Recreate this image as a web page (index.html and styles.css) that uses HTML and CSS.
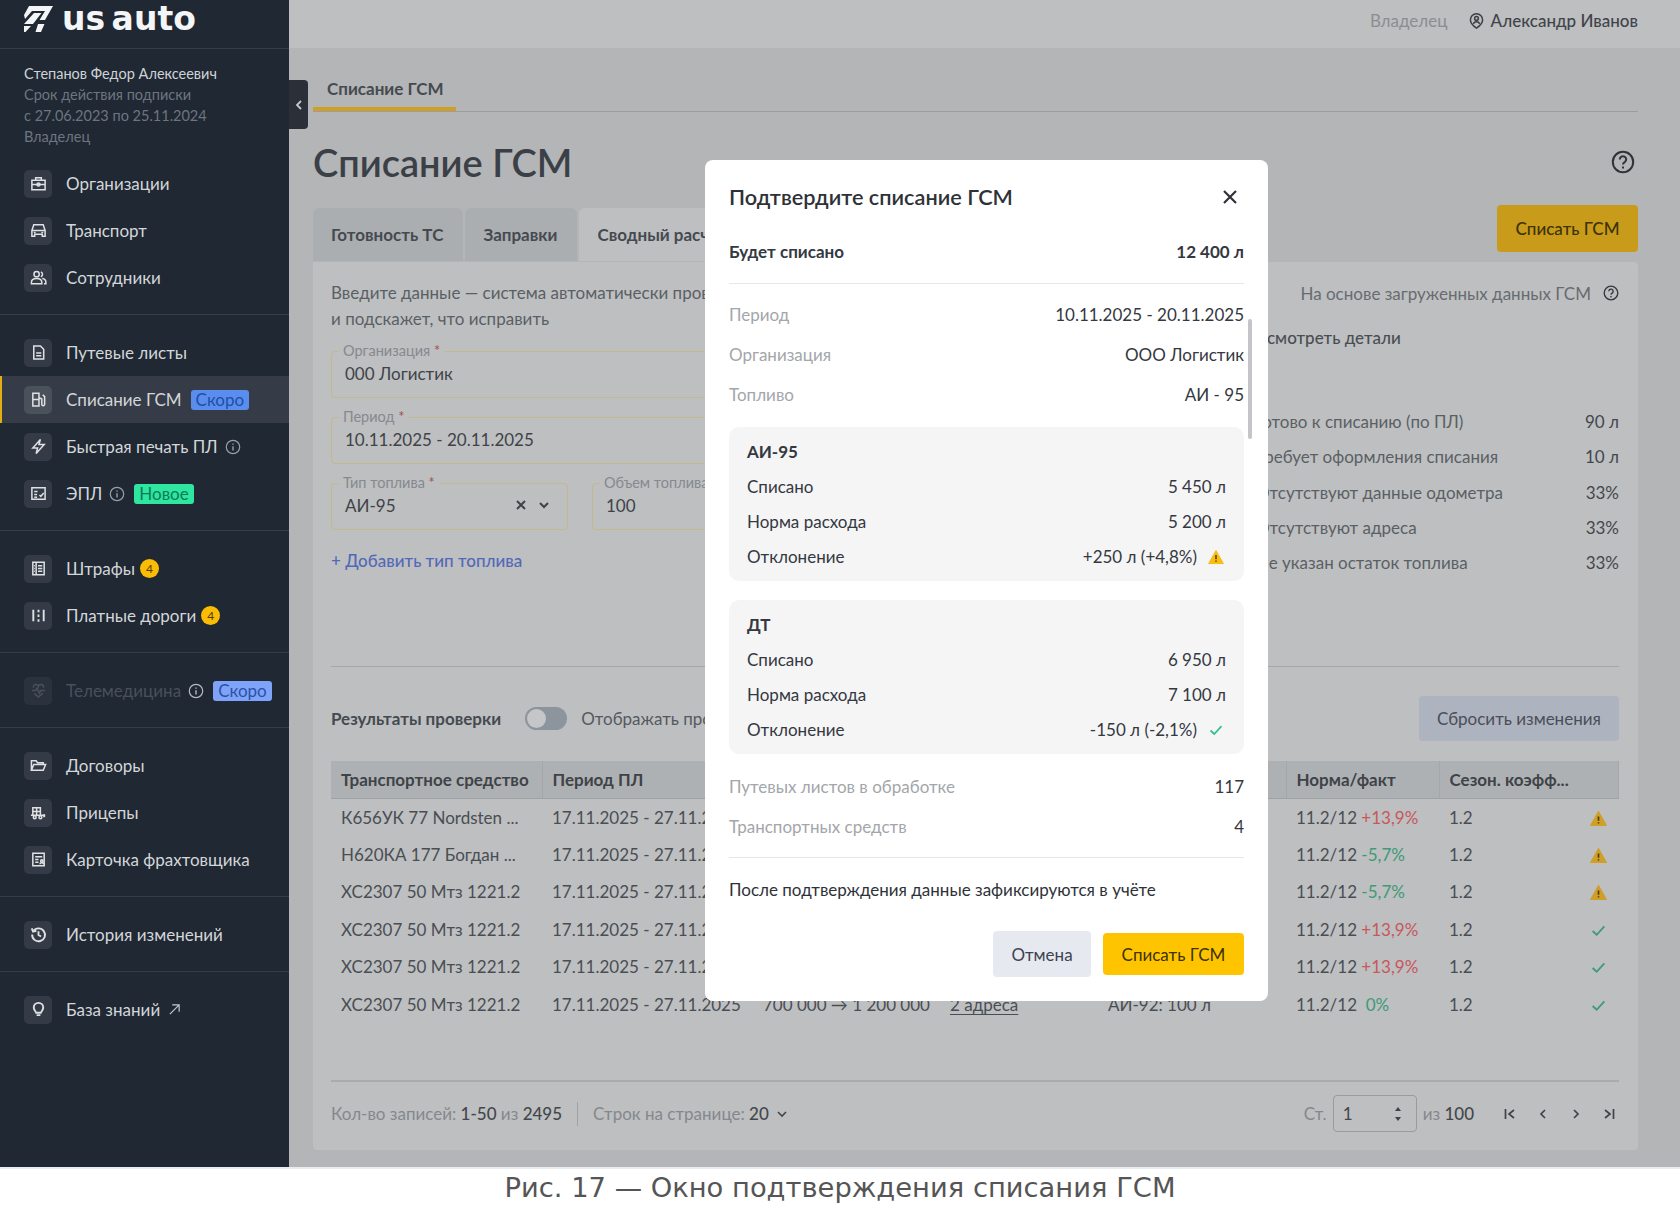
FILE: index.html
```
<!DOCTYPE html>
<html lang="ru">
<head>
    <meta charset="utf-8">
    <title>Списание ГСМ</title>
    <link rel="stylesheet" href="styles.css">
</head>
<body>
<svg class="defs" width="0" height="0">
    <symbol id="warn" viewBox="0 0 16 16"><path d="M8 1.500 15.400 14.600H.6Z" fill="currentColor" stroke="currentColor" stroke-linejoin="round"/><path d="M8 6v4.200M8 11.600v1.200" stroke="#4a3b06" stroke-width="1.500"/></symbol>
    <symbol id="check" viewBox="0 0 16 16"><path d="M2.500 8.500 6.300 12 13.500 4.200" fill="none" stroke="currentColor" stroke-width="1.700"/></symbol>
    <symbol id="info" viewBox="0 0 16 16"><circle cx="8" cy="8" r="6.700" fill="none" stroke="currentColor" stroke-width="1.200"/><path d="M8 7.200v4.200M8 4.400v1.400" stroke="currentColor" stroke-width="1.400"/></symbol>
    <symbol id="help" viewBox="0 0 24 24"><circle cx="12" cy="12" r="10.200" fill="none" stroke="currentColor" stroke-width="2"/><path d="M8.800 9.400a3.200 3.200 0 1 1 4.900 2.700c-1.100.7-1.700 1.200-1.700 2.500M12 16.600v2" fill="none" stroke="currentColor" stroke-width="2"/></symbol>
</svg>

<div class="screen">
    <aside class="sidebar">
        <div class="logo">
            <svg class="logo-mark" viewBox="0 0 30 28"><path d="M5 1H29L21 15H15.500L21 6H8L1 14 0 10Z M0 19 10 8H17.500L9 19Z M14 19H20.500L17 27H11.500Z M0 21H7L1.500 27H0Z" fill="#f4f5f6"/></svg>
            <span class="logo-text">us auto</span>
        </div>
        <div class="user">
            <div class="user-name">Степанов Федор Алексеевич</div>
            <div>Срок действия подписки</div>
            <div>с 27.06.2023 по 25.11.2024</div>
            <div>Владелец</div>
        </div>

        <nav class="group">
            <a class="item"><span class="tile"><svg viewBox="0 0 18 18"><path d="M2 5.500h14v10H2zM6 5.500V3h6v2.500M2 10h14" /><circle cx="9" cy="10" r="1.600"/></svg></span>Организации</a>
            <a class="item"><span class="tile"><svg viewBox="0 0 18 18"><path d="M4 3h10l2 6v6h-3v-2H5v2H2V9zM2.500 9h13" /><path d="M4 11h2M12 11h2"/></svg></span>Транспорт</a>
            <a class="item"><span class="tile"><svg viewBox="0 0 18 18"><circle cx="7" cy="5.500" r="2.800"/><path d="M1.500 15.500v-1.500c0-2.500 2-4 5.500-4s5.500 1.500 5.500 4v1.500ZM11.500 3a2.800 2.800 0 0 1 0 5.200M13 10c2.500.3 3.800 1.700 3.800 4v1.500h-2"/></svg></span>Сотрудники</a>
        </nav>
        <nav class="group">
            <a class="item"><span class="tile"><svg viewBox="0 0 18 18"><path d="M4 2h7l3.500 3.500V16H4zM6.500 9.500h5.500M6.500 12.500h5.500"/></svg></span>Путевые листы</a>
            <a class="item active"><span class="tile"><svg viewBox="0 0 18 18"><path d="M3 2.500h6.500V16H3zM3 9h6.500M9.500 7l3 1.500V14a1.500 1.500 0 0 0 3 0V6l-2-2"/></svg></span>Списание ГСМ<span class="badge soon">Скоро</span></a>
            <a class="item"><span class="tile"><svg viewBox="0 0 18 18"><path d="M11 1.500 3 10.500h5l-1.500 6 8.500-9.500h-5.500z"/></svg></span>Быстрая печать ПЛ<svg class="info"><use href="#info"/></svg></a>
            <a class="item"><span class="tile"><svg viewBox="0 0 18 18"><path d="M2 3h14v12H2zM4.500 7h3.500M4.500 10h3M4.500 13h3M10 10.500l1.500 1.500 3-3.500"/></svg></span>ЭПЛ<svg class="info"><use href="#info"/></svg><span class="badge fresh">Новое</span></a>
        </nav>
        <nav class="group">
            <a class="item"><span class="tile"><svg viewBox="0 0 18 18"><path d="M3 2.500h12v13H3zM6.500 2.500v13M4.500 6h.8M4.500 9h.8M4.500 12h.8M8.500 6H13M8.500 9H13M8.500 12H13"/></svg></span>Штрафы<span class="count">4</span></a>
            <a class="item"><span class="tile"><svg viewBox="0 0 18 18"><path class="thick" d="M3.500 3v12M14.500 3v12M9 3v2.500M9 8v2.500M9 13v2.500"/></svg></span>Платные дороги<span class="count">4</span></a>
        </nav>
        <nav class="group">
            <a class="item off"><span class="tile"><svg viewBox="0 0 18 18"><path d="M2 9h4l1.500-2.500L10 12l1.500-3H16M3.500 6C3.500 2 8 1.500 9 4.500 10 1.500 14.500 2 14.500 6M4.500 12 9 16l4.500-4"/></svg></span>Телемедицина<svg class="info bright"><use href="#info"/></svg><span class="badge soon pale">Скоро</span></a>
        </nav>
        <nav class="group">
            <a class="item"><span class="tile"><svg viewBox="0 0 18 18"><path d="M1.500 14V4h5l1.500 2h6v2M1.500 14 4 8h12.500L14 14Z"/></svg></span>Договоры</a>
            <a class="item"><span class="tile"><svg viewBox="0 0 18 18"><path d="M3 4h8v8H3zM3 8h8M7 4v8M1 12h15"/><circle cx="5" cy="14" r="1.500"/><circle cx="11" cy="14" r="1.500"/><path class="thick" d="M15 11v3"/></svg></span>Прицепы</a>
            <a class="item"><span class="tile"><svg viewBox="0 0 18 18"><path d="M3 2.500h12v13H3zM5.500 6H13M5.500 9h3.500M5.500 12h3.500"/><circle cx="12.500" cy="10.500" r="1.200"/><path d="M10.500 14c0-1 1-1.500 2-1.500s2 .5 2 1.500"/></svg></span>Карточка фрахтовщика</a>
        </nav>
        <nav class="group">
            <a class="item"><span class="tile"><svg viewBox="0 0 18 18"><path class="thick" d="M3.500 5.500A6.800 6.800 0 1 1 2.300 9M1.800 2.500l1.500 3.500 3.500-.8M9 5.500V9.500l2.700 1.600"/></svg></span>История изменений</a>
        </nav>
        <nav class="group">
            <a class="item"><span class="tile"><svg viewBox="0 0 18 18"><path class="thick" d="M6.500 12.500C6 10.500 4 10 4 7a5 5 0 0 1 10 0c0 3-2 3.500-2.500 5.500zM7 15h4"/></svg></span>База знаний<svg class="ext" viewBox="0 0 14 14"><path d="M2 12 12 2M4.500 2H12v7.500"/></svg></a>
        </nav>
    </aside>

    <button class="collapse"><svg viewBox="0 0 8 12"><path d="M6 2 2 6l4 4"/></svg></button>

    <div class="main">
        <header class="topbar">
            <span class="role">Владелец</span>
            <svg class="pin" viewBox="0 0 16 18"><path d="M8 16.500C3.500 13.500 1.500 11 1.500 7.800a6.500 6.500 0 0 1 13 0c0 3.200-2 5.700-6.500 8.700Z"/><circle cx="8" cy="6.300" r="2"/><path d="M4.500 12c.7-1.500 2-2.200 3.500-2.200s2.800.7 3.500 2.200"/></svg>
            <span class="person">Александр Иванов</span>
        </header>

        <div class="content">
            <div class="crumbs"><span class="crumb">Списание ГСМ</span></div>
            <div class="title-row">
                <h1>Списание ГСМ</h1>
                <svg class="help"><use href="#help"/></svg>
            </div>
            <div class="tabs-row">
                <div class="tab">Готовность ТС</div>
                <div class="tab">Заправки</div>
                <div class="tab current">Сводный расчёт</div>
                <button class="btn-write">Списать ГСМ</button>
            </div>

            <section class="panel">
                <div class="calc">
                    <div class="form">
                        <p class="intro">Введите данные — система автоматически проверит их<br>и подскажет, что исправить</p>
                        <div class="field"><label>Организация <i>*</i></label>000 Логистик</div>
                        <div class="field"><label>Период <i>*</i></label>10.11.2025 - 20.11.2025</div>
                        <div class="field-row">
                            <div class="field fuel"><label>Тип топлива <i>*</i></label>АИ-95
                                <svg class="field-x" viewBox="0 0 12 12"><path d="M2 2l8 8M10 2l-8 8"/></svg>
                                <svg class="field-v" viewBox="0 0 12 12"><path d="M2 4l4 4 4-4"/></svg>
                            </div>
                            <div class="field"><label>Объем топлива <i>*</i></label>100</div>
                        </div>
                        <a class="add">+ Добавить тип топлива</a>
                    </div>
                    <div class="summary">
                        <div class="basis">На основе загруженных данных ГСМ<svg class="basis-i"><use href="#help"/></svg></div>
                        <div class="details">Посмотреть детали</div>
                        <ul class="stats">
                            <li><span>Готово к списанию (по ПЛ)</span><b>90 л</b></li>
                            <li><span>Требует оформления списания</span><b>10 л</b></li>
                            <li><span>Отсутствуют данные одометра</span><b>33%</b></li>
                            <li><span>Отсутствуют адреса</span><b>33%</b></li>
                            <li><span>Не указан остаток топлива</span><b>33%</b></li>
                        </ul>
                    </div>
                </div>

                <div class="results">
                    <b>Результаты проверки</b>
                    <span class="toggle"></span>
                    <span class="toggle-label">Отображать проблемные</span>
                    <button class="btn-reset">Сбросить изменения</button>
                </div>

                <table class="grid">
                    <colgroup><col class="c1"><col class="c2"><col class="c3"><col class="c4"><col class="c5"><col class="c6"><col></colgroup>
                    <thead>
                        <tr><th>Транспортное средство</th><th>Период ПЛ</th><th></th><th></th><th></th><th>Норма/факт</th><th>Сезон. коэфф...</th></tr>
                    </thead>
                    <tbody>
                        <tr><td>К656УК 77 Nordsten ...</td><td>17.11.2025 - 27.11.2025</td><td></td><td></td><td></td><td>11.2/12 <em class="up">+13,9%</em></td><td class="coef">1.2<svg class="st warn"><use href="#warn"/></svg></td></tr>
                        <tr><td>Н620КА 177 Богдан ...</td><td>17.11.2025 - 27.11.2025</td><td></td><td></td><td></td><td>11.2/12 <em class="down">-5,7%</em></td><td class="coef">1.2<svg class="st warn"><use href="#warn"/></svg></td></tr>
                        <tr><td>ХС2307 50 Мтз 1221.2</td><td>17.11.2025 - 27.11.2025</td><td></td><td></td><td></td><td>11.2/12 <em class="down">-5,7%</em></td><td class="coef">1.2<svg class="st warn"><use href="#warn"/></svg></td></tr>
                        <tr><td>ХС2307 50 Мтз 1221.2</td><td>17.11.2025 - 27.11.2025</td><td></td><td></td><td></td><td>11.2/12 <em class="up">+13,9%</em></td><td class="coef">1.2<svg class="st ok"><use href="#check"/></svg></td></tr>
                        <tr><td>ХС2307 50 Мтз 1221.2</td><td>17.11.2025 - 27.11.2025</td><td></td><td></td><td></td><td>11.2/12 <em class="up">+13,9%</em></td><td class="coef">1.2<svg class="st ok"><use href="#check"/></svg></td></tr>
                        <tr><td>ХС2307 50 Мтз 1221.2</td><td>17.11.2025 - 27.11.2025</td><td>700 000 → 1 200 000</td><td><u>2 адреса</u></td><td>АИ-92: 100 л</td><td>11.2/12 &nbsp;<em class="down">0%</em></td><td class="coef">1.2<svg class="st ok"><use href="#check"/></svg></td></tr>
                    </tbody>
                </table>

                <footer class="pager">
                    <span class="muted">Кол-во записей: <b>1-50</b> из <b>2495</b></span>
                    <span class="sep"></span>
                    <span class="muted">Строк на странице: <b>20</b></span>
                    <svg class="pg-small" viewBox="0 0 12 12"><path d="M2 4l4 4 4-4"/></svg>
                    <span class="pager-right">
                        <span class="muted">Ст.</span>
                        <span class="page-input">1<svg viewBox="0 0 10 18"><path d="M5 2 8 6H2ZM5 16 2 12H8Z"/></svg></span>
                        <span class="muted">из <b>100</b></span>
                        <span class="pg-nav">
                            <svg viewBox="0 0 14 14"><path d="M2.500 2v10M11 3 6 7l5 4"/></svg>
                            <svg viewBox="0 0 14 14"><path d="M9 3 5 7l4 4"/></svg>
                            <svg viewBox="0 0 14 14"><path d="M5 3l4 4-4 4"/></svg>
                            <svg viewBox="0 0 14 14"><path d="M11.500 2v10M3 3l5 4-5 4"/></svg>
                        </span>
                    </span>
                </footer>
            </section>
        </div>
    </div>

    <div class="modal">
        <div class="modal-head">
            <h2>Подтвердите списание ГСМ</h2>
            <svg class="close" viewBox="0 0 16 16"><path d="M2 2l12 12M14 2 2 14"/></svg>
        </div>
        <div class="total"><span>Будет списано</span><span>12 400 л</span></div>
        <div class="rows">
            <div class="row"><span>Период</span><b>10.11.2025 - 20.11.2025</b></div>
            <div class="row"><span>Организация</span><b>ООО Логистик</b></div>
            <div class="row"><span>Топливо</span><b>АИ - 95</b></div>
        </div>
        <div class="fuel-box">
            <div class="fuel-name">АИ-95</div>
            <div class="fuel-row"><span>Списано</span><span>5 450 л</span></div>
            <div class="fuel-row"><span>Норма расхода</span><span>5 200 л</span></div>
            <div class="fuel-row"><span>Отклонение</span><span class="dev">+250 л (+4,8%)<svg class="st warn bright"><use href="#warn"/></svg></span></div>
        </div>
        <div class="fuel-box">
            <div class="fuel-name">ДТ</div>
            <div class="fuel-row"><span>Списано</span><span>6 950 л</span></div>
            <div class="fuel-row"><span>Норма расхода</span><span>7 100 л</span></div>
            <div class="fuel-row"><span>Отклонение</span><span class="dev">-150 л (-2,1%)<svg class="st ok bright"><use href="#check"/></svg></span></div>
        </div>
        <div class="rows after">
            <div class="row"><span>Путевых листов в обработке</span><b>117</b></div>
            <div class="row"><span>Транспортных средств</span><b>4</b></div>
        </div>
        <p class="note">После подтверждения данные зафиксируются в учёте</p>
        <div class="actions">
            <button class="btn-cancel">Отмена</button>
            <button class="btn-confirm">Списать ГСМ</button>
        </div>
        <span class="scrollbar"></span>
    </div>
</div>

<div class="caption">Рис. 17 — Окно подтверждения списания ГСМ</div>
</body>
</html>
```

FILE: styles.css
```
* {
    box-sizing: border-box;
}

html, body {
    margin: 0;
    height: 1216px;
    overflow: hidden;
    background: #fff;
    font-family: "Lato", "Noto Sans", sans-serif;
    font-size: 17px;
}

.defs {
    position: absolute;
}

button {
    font: inherit;
    border: 0;
    padding: 0;
}

.screen {
    position: relative;
    display: flex;
    height: 1167px;
}

/* sidebar */
.sidebar {
    width: 289px;
    flex: none;
    background: #1f2833;
    color: #d3d6d9;
}

.logo {
    display: flex;
    align-items: center;
    gap: 8px;
    height: 49px;
    padding: 0 0 11px 24px;
    border-bottom: 1px solid #353d49;
}

.logo-mark {
    width: 30px;
    height: 28px;
}

.logo-text {
    color: #f4f5f6;
    font-family: "DejaVu Sans", sans-serif;
    font-weight: 700;
    font-size: 33px;
    line-height: 38px;
    word-spacing: -5px;
}

.user {
    padding: 14px 24px 0;
    height: 97px;
    font-size: 14.5px;
    line-height: 21px;
    color: #6e7580;
}

.user-name {
    color: #d0d3d6;
}

.group {
    padding: 14px 0 13px;
    border-bottom: 1px solid #353d49;
}

.group:last-child {
    border-bottom: 0;
}

.item {
    display: flex;
    align-items: center;
    height: 47px;
    padding-left: 24px;
    white-space: nowrap;
}

.item.active {
    background: #363c47;
    box-shadow: inset 2px 0 0 #e3ae12;
}

.item.off {
    color: #49505b;
}

.tile {
    display: flex;
    align-items: center;
    justify-content: center;
    width: 28px;
    height: 28px;
    margin-right: 14px;
    border-radius: 5px;
    background: #343b46;
}

.item.active .tile {
    background: #4b515b;
}

.item.off .tile {
    background: #2a323d;
    color: #49505b;
}

.tile svg {
    width: 17px;
    height: 17px;
    fill: none;
    stroke: #dfe1e4;
    stroke-width: 1.6;
}

.item.off .tile svg {
    stroke: #49505b;
}

.tile svg .thick {
    stroke-width: 2;
}

.info {
    width: 16px;
    height: 16px;
    margin-left: 7px;
    color: #9aa0a8;
}

.info.bright {
    color: #b6bbc2;
}

.badge {
    height: 20px;
    padding: 0 5px;
    margin-left: 9px;
    border-radius: 3px;
    line-height: 20px;
}

.soon {
    background: #5b8def;
    color: #1d4fa6;
}

.soon.pale {
    background: #7fa3f8;
    color: #2a52a8;
}

.fresh {
    background: #2ee6a0;
    color: #0c7a55;
}

.count {
    width: 19px;
    height: 19px;
    margin-left: 5px;
    border-radius: 50%;
    background: #fbbc05;
    color: #4e3e08;
    font-size: 12px;
    line-height: 19px;
    text-align: center;
}

.ext {
    width: 13px;
    height: 13px;
    margin-left: 8px;
    fill: none;
    stroke: #c4c7cb;
    stroke-width: 1.3;
}

.collapse {
    position: absolute;
    left: 289px;
    top: 80px;
    width: 19px;
    height: 49px;
    border-radius: 0 4px 4px 0;
    background: #2a2f38;
}

.collapse svg {
    width: 8px;
    height: 12px;
    fill: none;
    stroke: #c4c7cb;
    stroke-width: 1.8;
}

/* page behind the dialog */
.main {
    flex: 1;
    min-width: 0;
    background: #b3b5b7;
    color: #43474c;
}

.topbar {
    display: flex;
    align-items: center;
    justify-content: flex-end;
    height: 48px;
    padding: 0 42px 7px 0;
    background: #bdbfc1;
}

.role {
    color: #8b8e91;
    margin-right: 22px;
}

.pin {
    width: 15px;
    height: 18px;
    margin-right: 6px;
    fill: none;
    stroke: #3c4045;
    stroke-width: 1.6;
}

.person {
    font-weight: 500;
    color: #40444a;
}

.content {
    padding: 0 42px 0 24px;
}

.crumbs {
    height: 64px;
    border-bottom: 1px solid #9b9d9f;
    padding-top: 29px;
}

.crumb {
    display: inline-block;
    width: 143px;
    height: 34px;
    padding-left: 14px;
    font-weight: 700;
    line-height: 24px;
    color: #454a50;
    border-bottom: 4px solid #cf9f27;
}

.title-row {
    display: flex;
    align-items: center;
    justify-content: space-between;
    height: 96px;
    padding-top: 3px;
}

h1 {
    margin: 0;
    font-size: 38px;
    font-weight: 600;
    color: #3b4047;
}

.help {
    width: 24px;
    height: 24px;
    color: #2f3338;
    margin-right: 3px;
}

.tabs-row {
    display: flex;
    gap: 2px;
    height: 54px;
}

.tab {
    height: 53px;
    padding: 0 20px 0 18px;
    border-radius: 6px 6px 0 0;
    background: #abaeb0;
    font-weight: 700;
    line-height: 54px;
    color: #454a50;
}

.tab.current {
    background: #bdbfc1;
}

.btn-write {
    margin: -3px 0 0 auto;
    width: 141px;
    height: 47px;
    border-radius: 4px;
    background: #c89c1a;
    color: #3d3208;
    font-weight: 500;
}

.panel {
    height: 888px;
    padding: 18px 19px 0 18px;
    border-radius: 0 4px 4px 4px;
    background: #bdbfc1;
}

.calc {
    display: flex;
    justify-content: space-between;
    height: 387px;
    border-bottom: 1px solid #a5a7a9;
}

.form {
    width: 860px;
}

.intro {
    margin: 0 0 19px;
    line-height: 26px;
    color: #5b5f64;
    white-space: nowrap;
}

.field {
    position: relative;
    height: 47px;
    margin-bottom: 19px;
    padding: 11px 13px 0;
    border: 1px solid #c4b88e;
    border-radius: 4px;
    line-height: 22px;
    color: #3f4348;
}

.field label {
    position: absolute;
    left: 7px;
    top: -8px;
    padding: 0 4px;
    background: #bdbfc1;
    font-size: 14.5px;
    line-height: 14px;
    color: #86898d;
}

.field label i {
    color: #a8504f;
    font-style: normal;
}

.field-row {
    display: flex;
    gap: 24px;
}

.field-row .field {
    flex: 1;
}

.field-row .fuel {
    flex: none;
    width: 237px;
}

.field-x, .field-v {
    position: absolute;
    top: 15px;
    width: 12px;
    height: 12px;
    fill: none;
    stroke: #3f4348;
    stroke-width: 2;
}

.field-x {
    right: 40px;
}

.field-v {
    right: 17px;
}

.add {
    display: block;
    margin-top: 1px;
    color: #5468b8;
    font-weight: 500;
    line-height: 22px;
}

.summary {
    width: 363px;
    color: #5b5f64;
}

.basis {
    display: flex;
    align-items: center;
    justify-content: flex-end;
    height: 26px;
    color: #686c70;
}

.basis-i {
    width: 16px;
    height: 16px;
    margin-left: 12px;
    color: #33373c;
}

.details {
    margin: 19px 0 0 -11px;
    line-height: 26px;
    font-weight: 500;
    color: #4a4e53;
}

.stats {
    list-style: none;
    margin: 53px 0 0;
    padding: 0;
}

.stats li {
    display: flex;
    justify-content: space-between;
    height: 35.25px;
    line-height: 35px;
}

.stats b {
    font-weight: 400;
    color: #43474c;
}

.results {
    display: flex;
    align-items: center;
    height: 94px;
    padding-top: 8px;
}

.results b {
    font-weight: 700;
    color: #454a50;
}

.toggle {
    position: relative;
    width: 42px;
    height: 23px;
    margin: 0 14px 0 24px;
    border-radius: 12px;
    background: #8c949e;
}

.toggle::before {
    content: "";
    position: absolute;
    left: 2px;
    top: 2px;
    width: 19px;
    height: 19px;
    border-radius: 50%;
    background: #c4c6c8;
}

.toggle-label {
    width: 124px;
    overflow: hidden;
    white-space: nowrap;
    color: #56595e;
}

.btn-reset {
    margin-left: auto;
    width: 200px;
    height: 45px;
    border-radius: 4px;
    background: #aeb3c0;
    color: #4a4e57;
}

.grid {
    width: 1288px;
    table-layout: fixed;
    border-collapse: collapse;
}

.c1 { width: 211px; }
.c2 { width: 211px; }
.c3 { width: 187px; }
.c4 { width: 158px; }
.c5 { width: 188px; }
.c6 { width: 153px; }

.grid th {
    height: 37px;
    padding: 0 10px;
    background: #aeb1b3;
    border-right: 1px solid #a5a8aa;
    border-bottom: 1px solid #9fa2a4;
    text-align: left;
    font-weight: 700;
    color: #3f4348;
    white-space: nowrap;
}

.grid td {
    height: 37.5px;
    padding: 0 10px;
    color: #4a4e53;
    white-space: nowrap;
}

.grid td u {
    text-underline-offset: 3px;
}

.grid em {
    font-style: normal;
}

.up {
    color: #c9575a;
}

.down {
    color: #3f9a76;
}

.coef {
    position: relative;
}

.st {
    width: 16px;
    height: 16px;
}

.coef .st {
    position: absolute;
    right: 12px;
    top: 11px;
    width: 17px;
    height: 17px;
}

.warn {
    color: #cf9f27;
}

.warn.bright {
    color: #f7bd14;
}

.ok {
    color: #3f9a76;
}

.ok.bright {
    color: #35c088;
}

.pager {
    display: flex;
    align-items: center;
    height: 65px;
    margin-top: 57px;
    border-top: 2px solid #a9abad;
}

.muted {
    color: #85888c;
}

.muted b {
    font-weight: 500;
    color: #43474c;
}

.sep {
    width: 1px;
    height: 24px;
    margin: 0 15px;
    background: #a0a2a4;
}

.pg-small {
    width: 12px;
    height: 12px;
    margin-left: 7px;
    fill: none;
    stroke: #43474c;
    stroke-width: 1.6;
}

.pager-right {
    display: flex;
    align-items: center;
    margin-left: auto;
}

.page-input {
    display: flex;
    align-items: center;
    justify-content: space-between;
    width: 84px;
    height: 37px;
    margin: 0 6px 0 6px;
    padding: 0 13px 0 9px;
    border: 1px solid #999c9f;
    border-radius: 4px;
    color: #43474c;
}

.page-input svg {
    width: 10px;
    height: 18px;
    fill: #3f4348;
}

.pg-nav {
    display: flex;
    gap: 19px;
    margin-left: 29px;
    margin-right: 3px;
}

.pg-nav svg {
    width: 14px;
    height: 14px;
    fill: none;
    stroke: #3f4348;
    stroke-width: 1.7;
}

/* dialog */
.modal {
    position: absolute;
    left: 705px;
    top: 160px;
    width: 563px;
    height: 841px;
    padding: 0 24px;
    border-radius: 8px;
    background: #fff;
    color: #34383f;
}

.modal-head {
    display: flex;
    align-items: center;
    justify-content: space-between;
    height: 76px;
    padding-bottom: 3px;
}

h2 {
    margin: 0;
    font-size: 21.7px;
    font-weight: 600;
    color: #2e3238;
}

.close {
    width: 16px;
    height: 16px;
    margin-right: 6px;
    fill: none;
    stroke: #2e3238;
    stroke-width: 2.2;
}

.total {
    display: flex;
    justify-content: space-between;
    height: 48px;
    padding-top: 5px;
    font-weight: 700;
    line-height: 22px;
    border-bottom: 1px solid #e6e7e9;
}

.rows {
    padding-top: 10px;
}

.row {
    display: flex;
    justify-content: space-between;
    align-items: center;
    height: 40px;
    color: #a3a6aa;
}

.row b {
    font-weight: 400;
    color: #34383f;
}

.rows.after {
    padding: 12px 0 11px;
    border-bottom: 1px solid #e6e7e9;
}

.fuel-box {
    height: 154px;
    margin: 13px 0 19px;
    padding: 7px 18px;
    border-radius: 10px;
    background: #f5f5f6;
}

.fuel-box + .fuel-box {
    margin-top: 0;
    margin-bottom: 0;
}

.fuel-name {
    height: 35px;
    font-weight: 700;
    line-height: 35px;
}

.fuel-row {
    display: flex;
    justify-content: space-between;
    align-items: center;
    height: 35px;
}

.dev {
    display: flex;
    align-items: center;
    gap: 11px;
}

.dev .st {
    margin-right: 2px;
}

.note {
    margin: 0;
    padding-top: 21px;
    line-height: 22px;
    color: #2e3238;
}

.actions {
    display: flex;
    justify-content: flex-end;
    align-items: center;
    gap: 12px;
    margin-top: 30px;
}

.btn-cancel {
    width: 98px;
    height: 46px;
    border-radius: 4px;
    background: #e6eaf0;
    color: #3e4350;
}

.btn-confirm {
    width: 141px;
    height: 42px;
    border-radius: 4px;
    background: #ffc400;
    color: #3d3208;
}

.scrollbar {
    position: absolute;
    left: 543px;
    top: 159px;
    width: 4px;
    height: 120px;
    border-radius: 2px;
    background: #c4c5c9;
}

.caption {
    height: 49px;
    border-top: 2px solid #e8ebf0;
    text-align: center;
    font-family: "DejaVu Sans", sans-serif;
    font-size: 27.35px;
    line-height: 38px;
    color: #555;
}
```
